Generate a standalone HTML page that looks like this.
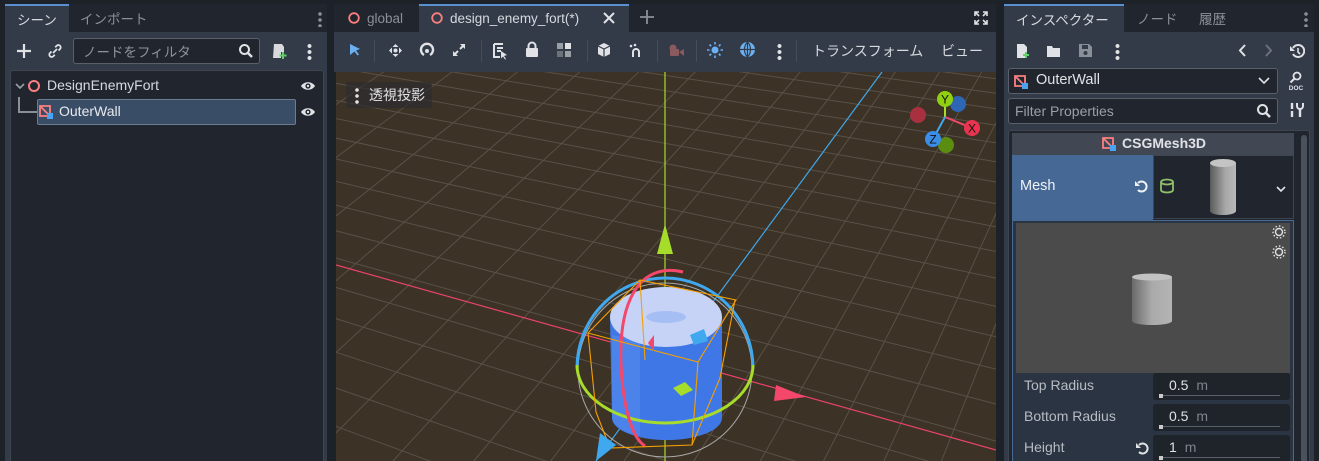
<!DOCTYPE html>
<html><head><meta charset="utf-8">
<style>
*{box-sizing:border-box;margin:0;padding:0}
html,body{overflow:hidden}
body{width:1319px;height:461px;background:#1d2128;font-family:"Liberation Sans","Noto Sans CJK JP",sans-serif;font-size:14px;color:#d6d9de;position:relative}
.a{position:absolute}
.jp{font-family:"Noto Sans CJK JP","Liberation Sans",sans-serif}
.tabbar{background:#21252d}
.tab{position:absolute;top:0;height:28px;line-height:27px;font-size:13.5px;color:#8a9099}
.tab.on{background:#333b48;color:#d6d9de;border-top:2px solid #5a8fd0}
.panel{background:#333b48}
.field{background:#21252e;border:1px solid #5a606a;border-radius:3px}
</style></head><body>

<!-- LEFT PANEL -->
<div class="a tabbar" style="left:5px;top:4px;width:322px;height:28px"></div>
<div class="tab on jp" style="left:5px;top:4px;width:64px;padding-left:12px">シーン</div>
<div class="tab jp" style="left:80px;top:5px">インポート</div>
<div class="a" style="left:318px;top:11px;width:4px;height:16px;background:radial-gradient(circle,#8a9099 1.6px,transparent 2px) 0 0/4px 6px"></div>
<div class="a panel" style="left:5px;top:32px;width:322px;height:429px"></div>
<svg class="a" style="left:15px;top:42px" width="18" height="18"><path d="M9 2v14M2 9h14" stroke="#e0e2e6" stroke-width="2.2"/></svg>
<svg class="a" style="left:47px;top:43px" width="16" height="16"><path d="M6 10l4-4M4.5 8.5l-1.5 1.5a2.3 2.3 0 003.3 3.3l1.5-1.5M11.5 7.5l1.5-1.5a2.3 2.3 0 00-3.3-3.3l-1.5 1.5" stroke="#e0e2e6" stroke-width="1.8" fill="none"/></svg>
<div class="a field jp" style="left:73px;top:38px;width:187px;height:26px;padding-left:9px;line-height:24px;color:#8f949c;font-size:13.5px">ノードをフィルタ</div>
<svg class="a" style="left:238px;top:43px" width="16" height="16"><circle cx="6.5" cy="6.5" r="4.5" stroke="#e0e2e6" stroke-width="2" fill="none"/><path d="M10 10l4 4" stroke="#e0e2e6" stroke-width="2.4"/></svg>
<svg class="a" style="left:270px;top:42px" width="18" height="18"><path d="M4 2h8l2 3v5h-3v6H3z" fill="#d8dadd"/><path d="M13 10v7M9.5 13.5h7" stroke="#5fd068" stroke-width="2"/></svg>
<div class="a" style="left:307px;top:43px;width:5px;height:17px;background:radial-gradient(circle,#e0e2e6 1.8px,transparent 2.2px) 0 0/5px 6px"></div>
<div class="a" style="left:10px;top:70px;width:314px;height:391px;background:#21252e;border:1px solid #3e4551;border-bottom:none;border-radius:3px 3px 0 0"></div>
<svg class="a" style="left:14px;top:80px" width="12" height="12"><path d="M2 4l4 4 4-4" stroke="#9aa0a8" stroke-width="1.6" fill="none"/></svg>
<svg class="a" style="left:27px;top:79px" width="14" height="14"><circle cx="7" cy="7" r="5" stroke="#fc7f7f" stroke-width="2" fill="none"/></svg>
<div class="a" style="left:47px;top:77px;font-size:14px;color:#d6d9de">DesignEnemyFort</div>
<svg class="a" style="left:300px;top:79px" width="16" height="14"><path d="M1 7c3-5 11-5 14 0c-3 5-11 5-14 0z" fill="#e0e2e6"/><circle cx="8" cy="7" r="2.6" fill="#21252e"/><circle cx="8" cy="7" r="1.2" fill="#e0e2e6"/></svg>
<svg class="a" style="left:17px;top:97px" width="22" height="20"><path d="M2 0v15h20" stroke="#8a9099" stroke-width="2" fill="none"/></svg>
<div class="a" style="left:37px;top:99px;width:259px;height:26px;background:#3a4d66;border:1px solid #6d7c90;border-radius:2px"></div>
<svg class="a" style="left:38px;top:104px" width="16" height="16"><path d="M2 2h10v10H2zM2 2l10 10" stroke="#fc7f7f" stroke-width="1.8" fill="none"/><rect x="9" y="9" width="6" height="6" fill="#4aa3f0"/></svg>
<div class="a" style="left:59px;top:103px;font-size:14px;color:#e8eaee">OuterWall</div>
<svg class="a" style="left:300px;top:105px" width="16" height="14"><path d="M1 7c3-5 11-5 14 0c-3 5-11 5-14 0z" fill="#e0e2e6"/><circle cx="8" cy="7" r="2.6" fill="#21252e"/><circle cx="8" cy="7" r="1.2" fill="#e0e2e6"/></svg>

<!-- CENTER -->
<div class="a tabbar" style="left:334px;top:4px;width:662px;height:28px"></div>
<svg class="a" style="left:347px;top:11px" width="14" height="14"><circle cx="7" cy="7" r="4.8" stroke="#fc7f7f" stroke-width="1.8" fill="none"/></svg>
<div class="tab" style="left:367px;top:5px;color:#8a9099">global</div>
<div class="tab on" style="left:419px;top:4px;width:210px"></div>
<svg class="a" style="left:430px;top:11px" width="14" height="14"><circle cx="7" cy="7" r="4.8" stroke="#fc7f7f" stroke-width="1.8" fill="none"/></svg>
<div class="tab" style="left:450px;top:5px;color:#d6d9de">design_enemy_fort(*)</div>
<svg class="a" style="left:602px;top:11px" width="14" height="14"><path d="M2 2l10 10M12 2L2 12" stroke="#e0e2e6" stroke-width="2"/></svg>
<svg class="a" style="left:639px;top:9px" width="16" height="16"><path d="M8 1v14M1 8h14" stroke="#8a9099" stroke-width="1.8"/></svg>
<svg class="a" style="left:974px;top:11px" width="14" height="14"><path d="M1 5V1h4M9 1h4v4M13 9v4H9M5 13H1V9M1 1l4 4M13 1L9 5M13 13L9 9M1 13l4-4" stroke="#e0e2e6" stroke-width="1.6" fill="none"/></svg>
<div class="a panel" style="left:334px;top:32px;width:662px;height:40px"></div>
<svg class="a" style="left:348px;top:43px" width="14" height="14"><path d="M2 1l10 5-4 1.5 3 4-1.5 1-3-4L2 12z" fill="#6ab0f3"/></svg>
<div class="a" style="left:374px;top:40px;width:1px;height:22px;background:#454d5a"></div>
<svg class="a" style="left:388px;top:43px" width="15" height="15"><path d="M7.5 1l3 3h-6zM7.5 14l3-3h-6zM1 7.5l3 3v-6zM14 7.5l-3 3v-6z" fill="#e0e2e6"/><circle cx="7.5" cy="7.5" r="2" fill="#e0e2e6"/></svg>
<svg class="a" style="left:419px;top:42px" width="16" height="16"><path d="M5 13A6 6 0 1 1 11 13" stroke="#e0e2e6" stroke-width="2.4" fill="none"/><circle cx="8" cy="9" r="2" fill="#e0e2e6"/></svg>
<svg class="a" style="left:451px;top:42px" width="16" height="16"><path d="M9 2h5v5zM2 14v-5l5 5z" fill="#e0e2e6"/><path d="M12 4L9 7M4 12l3-3" stroke="#e0e2e6" stroke-width="2"/></svg>
<div class="a" style="left:481px;top:40px;width:1px;height:22px;background:#454d5a"></div>
<svg class="a" style="left:492px;top:42px" width="16" height="18"><path d="M2 2h9M2 2v13h6M5 6h6M5 9h4" stroke="#e0e2e6" stroke-width="2" fill="none"/><path d="M9 9l6 4-3 1 2 3-1 .5-2-3-2 2z" fill="#e0e2e6"/></svg>
<svg class="a" style="left:524px;top:41px" width="16" height="17"><rect x="2" y="7" width="12" height="9" rx="1" fill="#e0e2e6"/><path d="M4.5 7V5a3.5 3.5 0 017 0v2" stroke="#e0e2e6" stroke-width="2" fill="none"/></svg>
<svg class="a" style="left:556px;top:42px" width="16" height="16"><rect x="1" y="1" width="6" height="6" fill="#9a9ea5"/><rect x="9" y="1" width="6" height="6" fill="#e0e2e6"/><rect x="1" y="9" width="6" height="6" fill="#6d7279"/><rect x="9" y="9" width="6" height="6" fill="#9a9ea5"/></svg>
<div class="a" style="left:587px;top:40px;width:1px;height:22px;background:#454d5a"></div>
<svg class="a" style="left:596px;top:42px" width="16" height="16"><path d="M8 1l6 3v8l-6 3-6-3V4z" fill="#e0e2e6"/><path d="M2 4l6 3 6-3M8 7v8" stroke="#333b48" stroke-width="1.2" fill="none"/></svg>
<svg class="a" style="left:628px;top:42px" width="16" height="16"><path d="M5 15V10a3 3 0 016 0v5" stroke="#e0e2e6" stroke-width="2" fill="none"/><circle cx="3" cy="4" r="1.3" fill="#e0e2e6"/><circle cx="7" cy="3" r="1.3" fill="#e0e2e6"/></svg>
<div class="a" style="left:657px;top:40px;width:1px;height:22px;background:#454d5a"></div>
<svg class="a" style="left:667px;top:42px" width="18" height="16"><circle cx="6" cy="6" r="3.5" fill="#8a5a5e"/><rect x="3" y="7" width="9" height="7" rx="1" fill="#8a5a5e"/><path d="M12 10l5-3v7z" fill="#8a5a5e"/></svg>
<div class="a" style="left:696px;top:40px;width:1px;height:22px;background:#454d5a"></div>
<svg class="a" style="left:707px;top:42px" width="16" height="16"><circle cx="8" cy="8" r="3.5" fill="#6ab0f3"/><g stroke="#6ab0f3" stroke-width="1.6"><path d="M8 0v2.5M8 13.5V16M0 8h2.5M13.5 8H16M2.5 2.5l1.7 1.7M11.8 11.8l1.7 1.7M13.5 2.5l-1.7 1.7M4.2 11.8l-1.7 1.7"/></g></svg>
<svg class="a" style="left:739px;top:41px" width="17" height="17"><circle cx="8.5" cy="8.5" r="7.5" fill="#6ab0f3"/><path d="M1 8.5h15M8.5 1v15M8.5 1c-4 4-4 11 0 15M8.5 1c4 4 4 11 0 15" stroke="#333b48" stroke-width="1.2" fill="none"/></svg>
<div class="a" style="left:777px;top:43px;width:5px;height:17px;background:radial-gradient(circle,#e0e2e6 1.8px,transparent 2.2px) 0 0/5px 6px"></div>
<div class="a" style="left:796px;top:40px;width:1px;height:22px;background:#454d5a"></div>
<div class="a jp" style="left:812px;top:41px;font-size:14px;color:#d6d9de">トランスフォーム</div>
<div class="a jp" style="left:941px;top:41px;font-size:14px;color:#d6d9de">ビュー</div>

<!-- VIEWPORT -->
<svg class="a" style="left:336px;top:72px" width="660" height="389" viewBox="336 72 660 389">
<rect x="336" y="72" width="660" height="389" fill="#3c3226"/>
<g id="grid" stroke="#716b62" stroke-width="1" opacity="0.55"></g>
<line x1="336" y1="265" x2="996" y2="450" stroke="#e9436a" stroke-width="1.2"/>
<line x1="882" y1="72" x2="596" y2="461" stroke="#3fa8ee" stroke-width="1.2"/>
<line x1="665" y1="72" x2="665" y2="461" stroke="#a6dc2a" stroke-width="1.2"/>
<path d="M610 318 L612 418 A55 22 0 0 0 722 418 L722 318 Z" fill="#3f78e6"/>
<path d="M612 335 L612 418 A55 22 0 0 0 640 436 L640 340Z" fill="#5a8df0" opacity=".5"/>
<ellipse cx="666" cy="317" rx="56" ry="30" fill="#c6d3f6"/>
<ellipse cx="666" cy="317" rx="20" ry="6" fill="#8fb0f4" opacity=".6"/>
<circle cx="665" cy="370" r="87" stroke="#a8a8a8" stroke-width="1" fill="none"/>
<path d="M577 368 A88 90 0 0 1 753 368" stroke="#3fa8ee" stroke-width="3" fill="none"/>
<path d="M577 365 A88 58 0 0 0 753 365" stroke="#a6dc2a" stroke-width="3" fill="none"/>
<path d="M683 272 C640 262 615 300 622 380 C626 420 635 440 645 446" stroke="#f4476c" stroke-width="3" fill="none"/>
<g stroke="#f5a000" stroke-width="1.1" fill="none">
<path d="M588 333 L640 280 L736 300 L698 362 Z"/>
<path d="M596 412 L610 448 L692 445 L720 378 L735 300"/>
<path d="M588 333 L596 412 M698 362 L692 445 M640 280 L645 360"/>
</g>
<path d="M665 224 l-8 30 h16z" fill="#a6dc2a"/>
<path d="M806 397 l-30-12 -2 16z" fill="#f4476c"/>
<path d="M596 461 l4-28 16 12z" fill="#3fa8ee"/>
<path d="M648 343 l6-8 0 16z" fill="#f4476c"/>
<path d="M690 335 l14 -6 4 12 -14 4z" fill="#3fa8ee"/>
<path d="M673 388 l12-6 8 8 -12 6z" fill="#a6dc2a"/>
<line x1="945" y1="99" x2="945" y2="117" stroke="#a6dc2a" stroke-width="2"/>
<line x1="945" y1="117" x2="972" y2="128" stroke="#f4476c" stroke-width="2"/>
<line x1="945" y1="117" x2="933" y2="139" stroke="#3fa8ee" stroke-width="2"/>
<circle cx="958" cy="104" r="8" fill="#2e66b4"/>
<circle cx="918" cy="115" r="8" fill="#a8303f"/>
<circle cx="946" cy="145" r="8" fill="#5a8d10"/>
<circle cx="945" cy="99" r="8" fill="#8fd010"/>
<circle cx="972" cy="128" r="8" fill="#e8344f"/>
<circle cx="933" cy="139" r="8" fill="#3a8ee8"/>
<text x="945" y="103.5" font-size="12" text-anchor="middle" font-family="Liberation Sans" fill="#111">Y</text>
<text x="972" y="132.5" font-size="12" text-anchor="middle" font-family="Liberation Sans" fill="#111">X</text>
<text x="933" y="143.5" font-size="12" text-anchor="middle" font-family="Liberation Sans" fill="#111">Z</text>
</svg>
<div class="a" style="left:346px;top:82px;width:86px;height:26px;background:rgba(40,42,48,.6);border-radius:3px"></div>
<div class="a" style="left:355px;top:87px;width:4px;height:17px;background:radial-gradient(circle,#e0e2e6 1.6px,transparent 2px) 0 0/4px 6px"></div>
<div class="a jp" style="left:369px;top:85px;font-size:14px;color:#e0e2e6">透視投影</div>

<!-- RIGHT PANEL -->
<div class="a tabbar" style="left:1004px;top:4px;width:310px;height:28px"></div>
<div class="tab on jp" style="left:1004px;top:4px;width:120px;padding-left:12px">インスペクター</div>
<div class="tab jp" style="left:1137px;top:5px">ノード</div>
<div class="tab jp" style="left:1199px;top:5px">履歴</div>
<div class="a" style="left:1304px;top:11px;width:4px;height:16px;background:radial-gradient(circle,#8a9099 1.6px,transparent 2px) 0 0/4px 6px"></div>
<div class="a panel" style="left:1004px;top:32px;width:310px;height:429px"></div>
<svg class="a" style="left:1015px;top:43px" width="16" height="16"><path d="M2 1h7l3 3v11H2z" fill="#e0e2e6"/><path d="M11 9v6M8 12h6" stroke="#5fd068" stroke-width="2"/></svg>
<svg class="a" style="left:1046px;top:43px" width="16" height="15"><path d="M1 3h5l1 2h7v9H1z" fill="#e0e2e6"/></svg>
<svg class="a" style="left:1078px;top:43px" width="15" height="15"><path d="M1 1h10l3 3v10H1z" fill="#8a9099"/><rect x="4" y="2" width="6" height="4" fill="#333b48"/><circle cx="7.5" cy="10" r="2" fill="#333b48"/></svg>
<div class="a" style="left:1115px;top:43px;width:5px;height:17px;background:radial-gradient(circle,#e0e2e6 1.8px,transparent 2.2px) 0 0/5px 6px"></div>
<svg class="a" style="left:1238px;top:43px" width="10" height="15"><path d="M7 2L2 7.5 7 13" stroke="#e0e2e6" stroke-width="2" fill="none"/></svg>
<svg class="a" style="left:1263px;top:43px" width="10" height="15"><path d="M3 2l5 5.5L3 13" stroke="#6c727b" stroke-width="2" fill="none"/></svg>
<svg class="a" style="left:1289px;top:43px" width="16" height="16"><path d="M4 5a6 6 0 1 1 0 6" stroke="#e0e2e6" stroke-width="2" fill="none"/><path d="M1 3v5h5z" fill="#e0e2e6"/><path d="M9 5v4l2 2" stroke="#e0e2e6" stroke-width="1.6" fill="none"/></svg>
<div class="a field" style="left:1008px;top:68px;width:270px;height:26px"></div>
<svg class="a" style="left:1013px;top:74px" width="16" height="16"><path d="M2 2h10v10H2zM2 2l10 10" stroke="#fc7f7f" stroke-width="1.8" fill="none"/><rect x="9" y="9" width="6" height="6" fill="#4aa3f0"/></svg>
<div class="a" style="left:1036px;top:72px;font-size:14.5px;color:#e0e2e6">OuterWall</div>
<svg class="a" style="left:1258px;top:76px" width="12" height="10"><path d="M1 2l5 5 5-5" stroke="#e0e2e6" stroke-width="1.6" fill="none"/></svg>
<svg class="a" style="left:1287px;top:71px" width="18" height="20"><circle cx="10" cy="5" r="3.5" stroke="#e0e2e6" stroke-width="1.8" fill="none"/><path d="M7.5 7.5l-4 4" stroke="#e0e2e6" stroke-width="2"/><text x="9" y="19" font-size="6.5" font-weight="bold" text-anchor="middle" fill="#e0e2e6" font-family="Liberation Sans">DOC</text></svg>
<div class="a field" style="left:1008px;top:98px;width:270px;height:26px;padding-left:6px;line-height:24px;color:#9ba0a8;font-size:14px">Filter Properties</div>
<svg class="a" style="left:1256px;top:103px" width="16" height="16"><circle cx="6.5" cy="6.5" r="4.5" stroke="#e0e2e6" stroke-width="2" fill="none"/><path d="M10 10l4 4" stroke="#e0e2e6" stroke-width="2.4"/></svg>
<svg class="a" style="left:1289px;top:102px" width="15" height="16"><path d="M3 1v6M3 9v6M11 6v9" stroke="#e0e2e6" stroke-width="2.4"/><path d="M8 1v3a3 3 0 006 0V1" stroke="#e0e2e6" stroke-width="2" fill="none"/></svg>
<div class="a" style="left:1008px;top:130px;width:302px;height:331px;background:#21252e;border:1px solid #3e4551;border-bottom:none;border-radius:3px 3px 0 0"></div>
<div class="a" style="left:1301px;top:135px;width:6px;height:326px;background:#4a515c;border-radius:3px 3px 0 0"></div>
<div class="a" style="left:1012px;top:133px;width:282px;height:22px;background:#414854"></div>
<svg class="a" style="left:1101px;top:136px" width="16" height="16"><path d="M2 2h10v10H2zM2 2l10 10" stroke="#fc7f7f" stroke-width="1.8" fill="none"/><rect x="9" y="9" width="6" height="6" fill="#4aa3f0"/></svg>
<div class="a" style="left:1122px;top:135px;font-size:14px;font-weight:bold;color:#e0e2e6">CSGMesh3D</div>
<div class="a" style="left:1012px;top:155px;width:141px;height:65px;background:#456895"></div>
<div class="a" style="left:1020px;top:178px;font-size:14.5px;color:#f0f2f5">Mesh</div>
<svg class="a" style="left:1134px;top:179px" width="15" height="15"><path d="M4 4a5 5 0 1 1 0 7" stroke="#f0f2f5" stroke-width="2" fill="none"/><path d="M1 2v5h5z" fill="#f0f2f5"/></svg>
<div class="a" style="left:1153px;top:155px;width:141px;height:64px;background:#21252e;border:1px solid #3e4551"></div>
<svg class="a" style="left:1159px;top:178px" width="16" height="16"><ellipse cx="8" cy="4" rx="6" ry="2.5" stroke="#8fbf6a" stroke-width="1.8" fill="none"/><path d="M2 4v8a6 2.5 0 0012 0V4" stroke="#8fbf6a" stroke-width="1.8" fill="none"/></svg>
<svg class="a" style="left:1208px;top:157px" width="30" height="60"><defs><linearGradient id="cg" x1="0" x2="1"><stop offset="0" stop-color="#5a5a5a"/><stop offset=".6" stop-color="#a8a8a8"/><stop offset="1" stop-color="#b8b8b8"/></linearGradient></defs><path d="M2 6v48a13 4 0 0026 0V6z" fill="url(#cg)"/><ellipse cx="15" cy="6" rx="13" ry="4" fill="#c4c4c4"/></svg>
<svg class="a" style="left:1275px;top:184px" width="12" height="10"><path d="M2 3l4 4 4-4" stroke="#e0e2e6" stroke-width="1.6" fill="none"/></svg>
<div class="a" style="left:1012px;top:220px;width:282px;height:241px;background:#2b3442;border:1px solid #456895;border-bottom:none"></div>
<div class="a" style="left:1016px;top:223px;width:274px;height:150px;background:#4b4b4b"></div>
<svg class="a" style="left:1272px;top:225px" width="14" height="14"><circle cx="7" cy="7" r="3.5" stroke="#e0e2e6" stroke-width="1.4" fill="none"/><g stroke="#e0e2e6" stroke-width="1.4" stroke-dasharray="1.5 2"><circle cx="7" cy="7" r="6" fill="none"/></g></svg>
<svg class="a" style="left:1272px;top:245px" width="14" height="14"><circle cx="7" cy="7" r="3.5" stroke="#e0e2e6" stroke-width="1.4" fill="none"/><g stroke="#e0e2e6" stroke-width="1.4" stroke-dasharray="1.5 2"><circle cx="7" cy="7" r="6" fill="none"/></g></svg>
<svg class="a" style="left:1130px;top:273px" width="45" height="54"><defs><linearGradient id="cg2" x1="0" x2="1"><stop offset="0" stop-color="#6a6a6a"/><stop offset=".5" stop-color="#aaaaaa"/><stop offset="1" stop-color="#b4b4b4"/></linearGradient></defs><path d="M2 4v44a20 4 0 0040 0V4z" fill="url(#cg2)"/><ellipse cx="22" cy="4" rx="20" ry="3.5" fill="#c2c2c2"/></svg>
<div class="a" style="left:1024px;top:377px;font-size:14px;color:#b8bcc3">Top Radius</div>
<div class="a" style="left:1153px;top:373px;width:137px;height:27px;background:#1f232a;border-radius:3px"></div>
<div class="a" style="left:1169px;top:377px;font-size:14px;color:#e0e2e6">0.5 <span style="color:#7d838c;margin-left:4px">m</span></div>
<div class="a" style="left:1160px;top:395px;width:120px;height:1px;background:#5a606a"></div>
<div class="a" style="left:1159px;top:394px;width:4px;height:4px;background:#c8cacd"></div>
<div class="a" style="left:1024px;top:408px;font-size:14px;color:#b8bcc3">Bottom Radius</div>
<div class="a" style="left:1153px;top:404px;width:137px;height:27px;background:#1f232a;border-radius:3px"></div>
<div class="a" style="left:1169px;top:408px;font-size:14px;color:#e0e2e6">0.5 <span style="color:#7d838c;margin-left:4px">m</span></div>
<div class="a" style="left:1160px;top:426px;width:120px;height:1px;background:#5a606a"></div>
<div class="a" style="left:1159px;top:425px;width:4px;height:4px;background:#c8cacd"></div>
<div class="a" style="left:1024px;top:439px;font-size:14px;color:#b8bcc3">Height</div>
<svg class="a" style="left:1135px;top:441px" width="15" height="15"><path d="M4 4a5 5 0 1 1 0 7" stroke="#e0e2e6" stroke-width="2" fill="none"/><path d="M1 2v5h5z" fill="#e0e2e6"/></svg>
<div class="a" style="left:1153px;top:435px;width:137px;height:26px;background:#1f232a;border-radius:3px 3px 0 0"></div>
<div class="a" style="left:1169px;top:439px;font-size:14px;color:#e0e2e6">1 <span style="color:#7d838c;margin-left:4px">m</span></div>
<div class="a" style="left:1160px;top:457px;width:120px;height:1px;background:#5a606a"></div>
<div class="a" style="left:1159px;top:456px;width:4px;height:4px;background:#c8cacd"></div>

<script>
(function(){
var g=document.getElementById('grid'),s='';
var ax=-1500,ay=-251;
var y=30,st=11;
while(y<1600){
  s+='<line x1="'+ax+'" y1="'+ay+'" x2="996" y2="'+y.toFixed(1)+'"/>';
  y+=st; st*=1.07;
}
var bx=1364,by=-600;
var xs=[];
for(var xx=1190,sx=45;xx>-1600;){xs.push(xx);xx-=sx;sx*=1.05;}
for(var xx=1235,sx2=42;xx<2800;){xs.push(xx);xx+=sx2;sx2*=0.96;if(sx2<10)sx2=10;}
xs.forEach(function(px){
  var dx=px-bx,dy=461-by;
  s+='<line x1="'+bx+'" y1="'+by+'" x2="'+(bx+dx*1.6).toFixed(1)+'" y2="'+(by+dy*1.6).toFixed(1)+'"/>';
});
g.innerHTML=s;
})();
</script>
</body></html>
